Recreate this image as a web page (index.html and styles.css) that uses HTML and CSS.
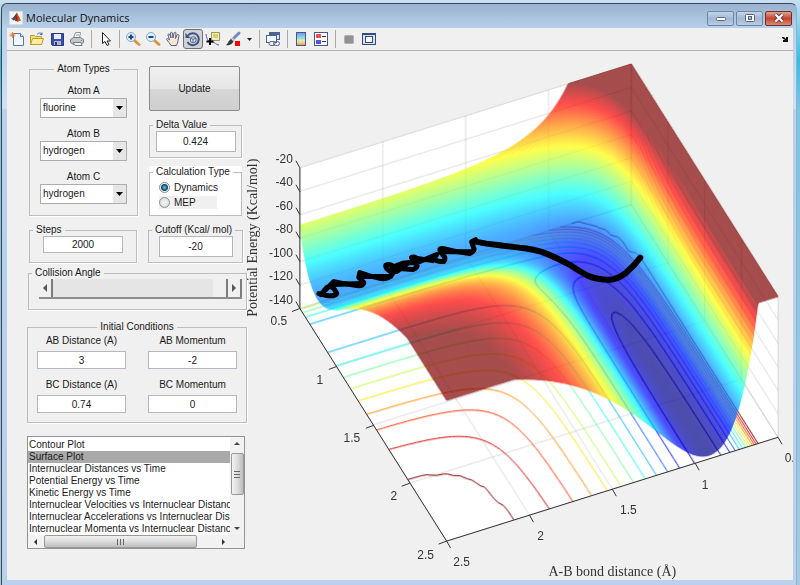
FILE: index.html
```
<!DOCTYPE html>
<html lang="en">

<head>
	<meta charset="UTF-8">
	<meta name="viewport" content="width=device-width, initial-scale=1.0">
	<title>Molecular Dynamics</title>
	<link rel="stylesheet" href="styles.css">
</head>

<body>
	<div class="window">
		<header class="titlebar">
			<svg class="app-icon" width="14" height="14" viewBox="0 0 14 14" aria-hidden="true">
				<rect width="14" height="14" fill="#f4f4f4" />
				<path d="M1 8l3-2 2 2-2 2z" fill="#3c7fb5" />
				<path d="M4 6l4-5 1 2-3 6-2 1z" fill="#5a3a50" />
				<path d="M8 1c1 1 3 6 5 9-2 0-3 1-4 2-1-1-2-2-3-2z" fill="#d9501e" />
				<path d="M8 2l1 7-2 2-1-1z" fill="#8c2412" />
			</svg>
			<h1 class="title">Molecular Dynamics</h1>
			<div class="window-buttons">
				<button type="button" class="win-btn" aria-label="Minimize">
					<svg width="12" height="10" viewBox="0 0 12 10"><rect x="1.5" y="4.5" width="9" height="3" rx="1" fill="#fff" stroke="#5b6a80" /></svg>
				</button>
				<button type="button" class="win-btn" aria-label="Maximize">
					<svg width="12" height="10" viewBox="0 0 12 10"><rect x="1.500" y="1.500" width="9" height="7" rx="1" fill="#fff" stroke="#56657b" /><rect x="4.500" y="3.500" width="3" height="3" fill="#a9bed6" stroke="#56657b" /></svg>
				</button>
				<button type="button" class="win-btn win-close" aria-label="Close">
					<svg width="12" height="10" viewBox="0 0 12 10"><path d="M2.500 1.500l7 7m0-7l-7 7" stroke="#6b4048" stroke-width="4" /><path d="M2.500 1.500l7 7m0-7l-7 7" stroke="#fff" stroke-width="2" /></svg>
				</button>
			</div>
		</header>

		<div class="client">
			<nav class="toolbar">
				<button type="button" class="tool" aria-label="New Figure">
					<svg width="16" height="16" viewBox="0 0 16 16"><path d="M4.500 2.500h7l3 3v9h-10z" fill="#f2f7ff" stroke="#5478ae" /><path d="M11.500 2.500v3h3" fill="#cfdff5" stroke="#5478ae" /><path d="M3.500 1v6M.5 4h6M1.500 2l4 4m0-4l-4 4" stroke="#e8833a" /></svg>
				</button>
				<button type="button" class="tool" aria-label="Open File">
					<svg width="16" height="16" viewBox="0 0 16 16"><path d="M1.500 13.500v-9h4l1 1h6v3" fill="#f8dc7a" stroke="#c29a2a" /><path d="M1.500 13.500l2-6h11l-2 6z" fill="#fff0a0" stroke="#c29a2a" /><path d="M8 3.500c2-2 4-2 5 0m0-2v2h-2" fill="none" stroke="#46679c" /></svg>
				</button>
				<button type="button" class="tool" aria-label="Save Figure">
					<svg width="16" height="16" viewBox="0 0 16 16"><path d="M2.500 2.500h12v12h-11l-1-1z" fill="#3c4ea8" stroke="#2c3a84" /><rect x="5" y="3" width="7" height="5" fill="#e8eefb" /><rect x="5" y="10" width="7" height="4" fill="#aab6dc" /><rect x="6" y="11" width="2" height="3" fill="#2c3a84" /></svg>
				</button>
				<button type="button" class="tool" aria-label="Print Figure">
					<svg width="16" height="16" viewBox="0 0 16 16"><path d="M4.500 7l2-5.500h5l-1 5.500" fill="#fff" stroke="#8a93a3" /><path d="M1.500 8.500l3-2h7l3 2v3l-3 2h-7l-3-2z" fill="#c4c7cc" stroke="#777d87" /><path d="M4 11.500h8l1 3H6z" fill="#f5f5f5" stroke="#777d87" /><path d="M7 4h3" stroke="#8a93a3" /><path d="M12 9.500h1" stroke="#4aa04a" /></svg>
				</button>
				<span class="sep"></span>
				<button type="button" class="tool" aria-label="Edit Plot">
					<svg width="16" height="16" viewBox="0 0 16 16"><path d="M5.500 1.500v11l2.500-2 2 4 2-1-2-3.500h3.500z" fill="#fff" stroke="#222" /></svg>
				</button>
				<span class="sep"></span>
				<button type="button" class="tool" aria-label="Zoom In">
					<svg width="16" height="16" viewBox="0 0 16 16"><path d="M9.500 9.500l4.500 4" stroke="#d99445" stroke-width="3" stroke-linecap="round" /><circle cx="6" cy="6" r="4.500" fill="#dcf2fb" stroke="#84a9cf" /><path d="M6 3.500v5M3.500 6h5" stroke="#23448c" stroke-width="2" /></svg>
				</button>
				<button type="button" class="tool" aria-label="Zoom Out">
					<svg width="16" height="16" viewBox="0 0 16 16"><path d="M9.500 9.500l4.500 4" stroke="#d99445" stroke-width="3" stroke-linecap="round" /><circle cx="6" cy="6" r="4.500" fill="#dcf2fb" stroke="#84a9cf" /><path d="M3.500 6h5" stroke="#23448c" stroke-width="2" /></svg>
				</button>
				<button type="button" class="tool" aria-label="Pan">
					<svg width="16" height="16" viewBox="0 0 16 16"><path d="M6 14.500c-1-2-3-4-4.500-6 0-1.500 1.500-1 3 .5L3 4c0-1.500 1.500-1.500 2 0l1 3-.5-5c.5-1 1.500-1 2 0L8 7l1-5c.5-1 2-1 2 0l-.5 5.500L12 4c.5-1 2-.5 2 .5l-1 5c0 2-1 3-1.500 5z" fill="#fbe6cf" stroke="#54608c" /></svg>
				</button>
				<button type="button" class="tool tool-pressed" aria-label="Rotate 3D" aria-pressed="true">
					<svg width="16" height="16" viewBox="0 0 16 16"><path d="M3 4.500a6 6 0 1 1-.5 6.500" fill="none" stroke="#3f5480" stroke-width="2" /><path d="M.5 2v5h5z" fill="#3f5480" /><path d="M5.500 7l2.500-1.500L11 7v3.500L8 12l-2.500-1.500zM5.500 7L8 8.500 11 7M8 8.500V12" fill="#d8dfed" stroke="#5b6d96" /></svg>
				</button>
				<button type="button" class="tool" aria-label="Data Cursor">
					<svg width="16" height="16" viewBox="0 0 16 16"><path d="M1 3c1 7 3 8 6 8s4 3 7 3" fill="none" stroke="#5a55e6" /><path d="M6.500 1.500h8v8h-8z" fill="#f4f0ab" stroke="#9c9750" /><path d="M8 4h5M8 6h5" stroke="#b0aa66" /><path d="M5 7v7M1.500 10.500h7" stroke="#000" stroke-width="2" /></svg>
				</button>
				<button type="button" class="tool" aria-label="Brush">
					<svg width="16" height="16" viewBox="0 0 16 16"><path d="M14 2L8 8" stroke="#7688c4" stroke-width="3" stroke-linecap="round" /><path d="M8.500 7.500l-2 2" stroke="#c9c9c9" stroke-width="4" /><path d="M6 8l2.500 2.500C7 13.500 4 15 1 14c2-1 2-4 5-6z" fill="#383838" /><rect x="10" y="10" width="5" height="5" fill="#f00" /></svg>
				</button>
				<button type="button" class="tool tool-drop" aria-label="Brush options">
					<svg width="5" height="3" viewBox="0 0 5 3"><path d="M0 0h5L2.500 3z" fill="#222" /></svg>
				</button>
				<span class="sep"></span>
				<button type="button" class="tool" aria-label="Link Plot">
					<svg width="16" height="16" viewBox="0 0 16 16"><rect x="4.500" y="1.500" width="10" height="7" fill="#dce6f5" stroke="#4c648f" /><path d="M4 3h11" stroke="#4c648f" stroke-width="2" /><rect x="1.500" y="4.500" width="10" height="7" fill="#f5f9ff" stroke="#4c648f" /><rect x="4" y="10.500" width="6" height="4" rx="2" fill="#eee" stroke="#566b8e" /><rect x="8.500" y="10.500" width="6" height="4" rx="2" fill="none" stroke="#566b8e" /></svg>
				</button>
				<span class="sep"></span>
				<button type="button" class="tool" aria-label="Insert Colorbar">
					<svg width="16" height="16" viewBox="0 0 16 16">
						<defs>
							<linearGradient id="bar" x1="0" y1="0" x2="0" y2="1">
								<stop offset="0" stop-color="#8f87e8" />
								<stop offset=".35" stop-color="#78d6ef" />
								<stop offset=".65" stop-color="#f0ee92" />
								<stop offset="1" stop-color="#f28e6c" />
							</linearGradient>
						</defs>
						<rect x="3.500" y="1.500" width="9" height="13" fill="url(#bar)" stroke="#41598c" />
					</svg>
				</button>
				<button type="button" class="tool" aria-label="Insert Legend">
					<svg width="16" height="16" viewBox="0 0 16 16"><rect x="1.500" y="1.500" width="13" height="13" fill="#fff" stroke="#41598c" /><rect x="3" y="3" width="5" height="4" fill="#ee5050" /><rect x="3" y="9" width="5" height="4" fill="#5353e8" /><path d="M9 5.500h4M9 10.500h4" stroke="#333" /></svg>
				</button>
				<span class="sep"></span>
				<button type="button" class="tool" aria-label="Hide Plot Tools">
					<svg width="16" height="16" viewBox="0 0 16 16"><rect x="3.500" y="4.500" width="9" height="8" rx="1" fill="#929292" stroke="#b0b0b0" /></svg>
				</button>
				<button type="button" class="tool" aria-label="Show Plot Tools">
					<svg width="16" height="16" viewBox="0 0 16 16"><rect x="1.500" y="2.500" width="13" height="11" fill="#d7e2f3" stroke="#344d80" /><path d="M1 3h14" stroke="#344d80" stroke-width="2" /><rect x="4.500" y="5.500" width="7" height="6" fill="#fff" stroke="#344d80" /></svg>
				</button>
				<button type="button" class="tool tool-dock" aria-label="Dock Figure">
					<svg width="6" height="6" viewBox="0 0 6 6"><path d="M0 1h2l2 2V1h2v5H1V4h2L0 2z" fill="#111" /></svg>
				</button>
			</nav>

			<main class="content">
				<form class="sidebar">
					<div class="row">
						<fieldset class="panel atoms">
							<legend>Atom Types</legend>
							<label for="atomA">Atom A</label>
							<select id="atomA" class="drop"><option>fluorine</option><option>hydrogen</option></select>
							<label for="atomB">Atom B</label>
							<select id="atomB" class="drop"><option>hydrogen</option><option>fluorine</option></select>
							<label for="atomC">Atom C</label>
							<select id="atomC" class="drop"><option>hydrogen</option><option>fluorine</option></select>
						</fieldset>

						<div class="right-col">
							<button type="button" class="update-btn">Update</button>
							<fieldset class="panel small">
								<legend><label for="delta">Delta Value</label></legend>
								<input id="delta" class="field" type="text" value="0.424">
							</fieldset>
							<fieldset class="panel calc">
								<legend>Calculation Type</legend>
								<label class="radio"><input type="radio" name="calc" checked>Dynamics</label>
								<label class="radio radio-grey"><input type="radio" name="calc">MEP</label>
							</fieldset>
						</div>
					</div>

					<div class="row row-steps">
						<fieldset class="panel small steps">
							<legend><label for="steps">Steps</label></legend>
							<input id="steps" class="field" type="text" value="2000">
						</fieldset>
						<fieldset class="panel small cutoff">
							<legend><label for="cutoff">Cutoff (Kcal/ mol)</label></legend>
							<input id="cutoff" class="field" type="text" value="-20">
						</fieldset>
					</div>

					<fieldset class="panel collision">
						<legend><label for="angle">Collision Angle</label></legend>
						<div class="slider">
							<button type="button" class="slider-btn" aria-label="Decrease angle"><svg width="4" height="8" viewBox="0 0 4 8"><path d="M4 0v8L0 4z" fill="#555" /></svg></button>
							<input id="angle" type="range" min="0" max="180" value="180">
							<button type="button" class="slider-btn" aria-label="Increase angle"><svg width="4" height="8" viewBox="0 0 4 8"><path d="M0 0v8l4-4z" fill="#555" /></svg></button>
						</div>
					</fieldset>

					<fieldset class="panel initial">
						<legend>Initial Conditions</legend>
						<div class="pair">
							<label for="abDist">AB Distance (A)</label>
							<input id="abDist" class="field" type="text" value="3">
						</div>
						<div class="pair">
							<label for="abMom">AB Momentum</label>
							<input id="abMom" class="field" type="text" value="-2">
						</div>
						<div class="pair">
							<label for="bcDist">BC Distance (A)</label>
							<input id="bcDist" class="field" type="text" value="0.74">
						</div>
						<div class="pair">
							<label for="bcMom">BC Momentum</label>
							<input id="bcMom" class="field" type="text" value="0">
						</div>
					</fieldset>

					<div class="listbox">
						<select class="plots" size="8" aria-label="Plot type">
							<option>Contour Plot</option>
							<option selected>Surface Plot</option>
							<option>Internuclear Distances vs Time</option>
							<option>Potential Energy vs Time</option>
							<option>Kinetic Energy vs Time</option>
							<option>Internuclear Velocities vs Internuclear Distance</option>
							<option>Internuclear Accelerations vs Internuclear Distance</option>
							<option>Internuclear Momenta vs Internuclear Distance</option>
						</select>
						<div class="vbar">
							<button type="button" aria-label="Scroll up"><svg width="6" height="3" viewBox="0 0 6 3"><path d="M0 3h6L3 0z" fill="#444" /></svg></button>
							<div class="vthumb"><svg width="6" height="7" viewBox="0 0 6 7"><path d="M0 .5h6M0 3.500h6M0 6.500h6" stroke="#666" /></svg></div>
							<button type="button" aria-label="Scroll down"><svg width="6" height="3" viewBox="0 0 6 3"><path d="M0 0h6L3 3z" fill="#444" /></svg></button>
						</div>
						<div class="hbar">
							<button type="button" aria-label="Scroll left"><svg width="3" height="6" viewBox="0 0 3 6"><path d="M3 0v6L0 3z" fill="#333" /></svg></button>
							<div class="hthumb"><svg width="7" height="6" viewBox="0 0 7 6"><path d="M.5 0v6M3.500 0v6M6.500 0v6" stroke="#666" /></svg></div>
							<button type="button" aria-label="Scroll right"><svg width="3" height="6" viewBox="0 0 3 6"><path d="M0 0v6l3-3z" fill="#333" /></svg></button>
						</div>
					</div>
				</form>

				<figure class="plot">
					<canvas id="surface" width="547" height="529"></canvas>
					<svg class="axes" viewBox="0 0 547 529" role="img" aria-label="Potential energy surface with trajectory">
						<g class="axis-lines">
							<path d="M53 117v141L200 491l332-104" />
							<path d="M53 117l-4-7M53 141l-4-7M53 164l-4-7M53 188l-4-7M53 211l-4-7M53 235l-4-7M53 258l-4-7" />
							<path d="M53 258l-8 3M90 316l-8 3M127 375l-8 3M163 433l-8 3M200 491l-8 3" />
							<path d="M200 491l4 7M283 465l4 7M366 439l4 7M449 413l4 7M532 387l4 7" />
						</g>
						<g class="ticks ticks-z">
							<text x="46" y="112">-20</text>
							<text x="46" y="135">-40</text>
							<text x="46" y="159">-60</text>
							<text x="46" y="182">-80</text>
							<text x="46" y="206">-100</text>
							<text x="46" y="229">-120</text>
							<text x="46" y="253">-140</text>
						</g>
						<g class="ticks">
							<text x="32" y="275">0.5</text>
							<text x="73" y="334">1</text>
							<text x="105" y="392">1.5</text>
							<text x="147" y="450">2</text>
							<text x="179" y="509">2.5</text>
							<text x="215" y="516">2.5</text>
							<text x="294" y="490">2</text>
							<text x="382" y="464">1.5</text>
							<text x="459" y="439">1</text>
							<text x="547" y="412">0.5</text>
						</g>
						<text class="axis-label" transform="translate(10 187) rotate(-90)">Potential Energy (Kcal/mol)</text>
						<text class="axis-label" x="366" y="526">A-B bond distance (Å)</text>
						<path class="loops" d="M72 243L80 245Q88 246 90 243L87 238Q82 234 79 238L74 244L87 231L97 233L110 235Q116 236 117 232L112 227L113 222L122 225L134 228Q142 229 146 223L140 218Q137 213 143 214L153 218L166 219Q172 217 170 213Q160 210 150 215Q138 222 150 221L162 212L173 211Q168 205 165 207Q168 213 178 209L190 204Q184 211 197 211Q200 208 196 204Q190 197 197 198L210 201L223 203Q229 200 227 197L225 191L229 189" />
						<path class="loops" d="M86 234L115 233M114 226L144 226M165 207L186 210M197 201L225 201" />
						<path class="trail" d="M229 191Q234 192 240 193L273 197Q287 198 300 203Q312 208 323 214Q335 222 341 225Q354 230 366 229Q374 227 380 222Q388 215 394 207" />
					</svg>
				</figure>
			</main>
		</div>
	</div>
	<script src="plot.js"></script>
</body>

</html>
```

FILE: styles.css
```
* {
	box-sizing: border-box;
}

body {
	margin: 0;
	padding: 3px 3px 0 1px;
	min-height: 100vh;
	display: flex;
	background: linear-gradient(to bottom, #c9dff2, #35bfe0 60px, #7ec4e4 110px, #a8c8e0);
	font-family: "Liberation Sans", Arial, sans-serif;
	font-size: 10px;
	line-height: 12px;
	color: #1a1a1a;
}

button {
	font: inherit;
	color: inherit;
	padding: 0;
	cursor: pointer;
}

svg {
	display: block;
}

.window {
	flex: 1;
	min-width: 0;
	display: flex;
	flex-direction: column;
	padding: 0 3px 5px 5px;
	border: 1px solid #3f4650;
	border-bottom: 0;
	border-right-color: #8fb4cf;
	border-radius: 6px 6px 0 0;
	background: linear-gradient(to bottom, #98b2cf, #b9d1ea 25px, #cfe0f3 104px, #b9d1ea 106px);
}

.titlebar {
	display: flex;
	align-items: center;
	height: 24px;
	padding: 4px 1px 0 2px;
}

.app-icon {
	border: 1px solid #d5dde6;
}

.title {
	margin: 0 auto 0 3px;
	font-family: "Open Sans", sans-serif;
	font-size: 11px;
	line-height: 14px;
	font-weight: 400;
	color: #111;
}

.window-buttons {
	display: flex;
	gap: 2px;
}

.win-btn {
	width: 27px;
	height: 15px;
	display: flex;
	align-items: center;
	justify-content: center;
	border: 1px solid #6f87a5;
	border-radius: 2px;
	background: linear-gradient(to bottom, #c3d5e9, #a2b9d3 50%, #b6cde6);
}

.win-close {
	border-color: #6b2f35;
	background: linear-gradient(to bottom, #e2a193, #c7452e 50%, #d98a72);
}

.client {
	flex: 1;
	display: flex;
	flex-direction: column;
	background: #f0f0f0;
}

.toolbar {
	display: flex;
	align-items: center;
	height: 23px;
	border-bottom: 1px solid #b4b4b4;
}

.tool {
	width: 20px;
	height: 20px;
	display: flex;
	align-items: center;
	justify-content: center;
	border: 1px solid transparent;
	border-radius: 3px;
	background: none;
}

.tool-pressed {
	border-color: #6e6e6e;
	background: #d0d2d6;
}

.tool-drop {
	width: 12px;
}

.tool-dock {
	margin-left: auto;
	width: 16px;
}

.sep {
	width: 1px;
	height: 18px;
	margin: 0 3px 0 4px;
	background: #a9a9a9;
}

.content {
	flex: 1;
	display: flex;
	align-items: flex-start;
}

/* left column */
.sidebar {
	width: 240px;
	flex: none;
	padding: 12px 0 0 20px;
}

.row {
	display: flex;
	align-items: flex-start;
	gap: 11px;
	padding-left: 2px;
}

.row-steps {
	margin-top: 8px;
}

.panel {
	min-width: 0;
	margin: 0;
	padding: 0;
	border: 1px solid #bdbdbd;
	box-shadow: 1px 1px 0 #fff;
}

.panel legend {
	padding: 0 3px;
	margin-left: 3px;
}

.atoms {
	width: 109px;
	height: 153px;
	display: flex;
	flex-direction: column;
	align-items: center;
}

.atoms legend,
.initial legend {
	margin: 0 auto;
}

.atoms label {
	margin: 10px 0 1px;
}

.drop {
	appearance: none;
	width: 87px;
	height: 20px;
	padding: 0 16px 0 2px;
	border: 1px solid #abadb3;
	border-radius: 0;
	font: inherit;
	color: inherit;
	background: url("data:image/svg+xml,%3Csvg xmlns='http://www.w3.org/2000/svg' width='13' height='18'%3E%3Crect width='13' height='18' fill='%23e6e6e6'/%3E%3Cpath d='M3 7h7l-3.500 4z'/%3E%3C/svg%3E") right center no-repeat #fff;
}

.right-col {
	width: 93px;
	padding-top: 3px;
}

.update-btn {
	display: block;
	width: 91px;
	height: 45px;
	border: 1px solid #8a8a8a;
	border-radius: 2px;
	background: linear-gradient(to bottom, #f0f0f0, #e6e6e6 50%, #d6d6d6 51%, #cfcfcf);
}

.right-col .panel {
	margin-top: 8px;
}

.field {
	display: block;
	width: 80px;
	height: 20px;
	padding: 0;
	border: 1px solid #b5b7bf;
	background: #fff;
	font: inherit;
	color: inherit;
	text-align: center;
}

.small {
	height: 39px;
}

.small .field {
	margin: 0 auto;
	height: 21px;
}

.steps {
	width: 108px;
}

.steps .field {
	height: 17px;
}

.cutoff {
	width: 95px;
}

.cutoff .field {
	width: 74px;
}

.right-col .calc {
	height: 50px;
	padding-top: 3px;
	background: #fff;
	box-shadow: 0 -6px 0 #fff;
}

.radio {
	display: flex;
	align-items: center;
	gap: 4px;
	width: 58px;
	height: 13px;
	margin: 0 0 2px 9px;
}

.radio-grey {
	background: #f0f0f0;
}

.radio input {
	appearance: none;
	flex: none;
	width: 11px;
	height: 11px;
	margin: 0;
	border: 1px solid #8e8f8f;
	border-radius: 50%;
	background: radial-gradient(circle, #f6f6f6, #d5d5d5);
}

.radio input:checked {
	background: radial-gradient(circle, #5fd0f5 0, #123f66 3px, #eee 4px);
}

.collision {
	width: 219px;
	height: 43px;
	margin: 4px 0 0 1px;
}

.slider {
	display: flex;
	height: 20px;
	margin: 0 4px 0 10px;
	border-bottom: 2px solid #8c8c8c;
}

.slider-btn {
	width: 14px;
	display: flex;
	align-items: center;
	justify-content: center;
	border: 0;
	border-right: 2px solid #7c7c7c;
	background: #f0f0f0;
}

.slider input {
	appearance: none;
	flex: 1;
	min-width: 0;
	height: 18px;
	margin: 0;
	background: #e5e5e5;
}

.slider input::-webkit-slider-thumb {
	appearance: none;
	width: 15px;
	height: 18px;
	border-right: 2px solid #7c7c7c;
	background: #f0f0f0;
}

.initial {
	width: 220px;
	height: 102px;
	margin-top: 11px;
	padding: 2px 9px 0;
	display: grid;
	grid-template-columns: 89px 89px;
	justify-content: space-between;
	align-content: start;
	row-gap: 10px;
}

.pair {
	text-align: center;
}

.pair label {
	display: block;
	margin-bottom: 4px;
}

.pair .field {
	width: 100%;
	height: 18px;
}

.listbox {
	display: grid;
	grid-template-columns: 1fr 14px;
	grid-template-rows: 98px 13px;
	width: 218px;
	margin-top: 13px;
	border: 1px solid #8e939c;
	background: #f0f0f0;
}

.plots {
	width: 100%;
	min-width: 0;
	height: 98px;
	padding: 2px 0 0;
	border: 0;
	border-radius: 0;
	outline: none;
	overflow: hidden;
	scrollbar-width: none;
	background: #fff;
	font: inherit;
	color: inherit;
}

.plots option {
	min-height: 12px;
	padding: 0 1px;
	line-height: 12px;
	color: #1a1a1a;
}

.plots option:checked {
	background: linear-gradient(#a9a9a9, #a9a9a9);
}

.vbar,
.hbar {
	display: flex;
	align-items: center;
	background: #f2f2f2;
}

.vbar {
	flex-direction: column;
}

.vbar button,
.hbar button {
	width: 14px;
	height: 13px;
	display: flex;
	align-items: center;
	justify-content: center;
	border: 0;
	background: none;
}

.vbar button:last-child,
.hbar button:last-child {
	margin: auto 0 0 auto;
}

.vthumb,
.hthumb {
	display: flex;
	align-items: center;
	justify-content: center;
	border: 1px solid #999;
	border-radius: 2px;
}

.vthumb {
	width: 13px;
	height: 42px;
	margin-top: 3px;
	background: linear-gradient(to right, #f3f3f3, #dcdcdc 50%, #bdbdbd);
}

.hthumb {
	width: 153px;
	height: 13px;
	margin-left: 2px;
	background: linear-gradient(to bottom, #f3f3f3, #dcdcdc 50%, #bdbdbd);
}

/* 3D plot */
.plot {
	flex: 1;
	min-width: 0;
	margin: 0;
	display: grid;
}

.plot canvas,
.axes {
	grid-area: 1 / 1;
	width: 100%;
	height: auto;
}

.axis-lines path {
	fill: none;
	stroke: #333;
	stroke-width: 1;
}

.ticks text {
	font-size: 12px;
	text-anchor: middle;
	fill: #333;
}

.ticks-z text {
	text-anchor: end;
}

.axis-label {
	font-family: "Liberation Serif", serif;
	font-size: 14px;
	text-anchor: middle;
	fill: #333;
}

.loops,
.trail {
	fill: none;
	stroke: #000;
	stroke-width: 5;
	stroke-linejoin: round;
	stroke-linecap: round;
}

.trail {
	stroke-width: 6;
}
```

FILE: plot.js
```
const canvas = document.getElementById('surface');
const ctx = canvas.getContext('2d');

const CUTOFF = -20;
const LOW = -138;

// Morse parameters: depth (kcal/mol), beta (1/A), r0 (A), Sato
const HF = { d: 137, b: 2.2187, r: 0.917, s: 0.18 };
const HH = { d: 108, b: 1.942, r: 0.7419, s: 0.18 };

function integrals(p, r) {
	const e = Math.exp(-p.b * (r - p.r));
	const singlet = p.d * (e * e - 2 * e);
	const triplet = p.d / 2 * (e * e + 2 * e) * (1 - p.s) / (1 + p.s);
	return [(singlet + triplet) / 2, (singlet - triplet) / 2];
}

// collinear LEPS potential
function energy(ab, bc) {
	const [q1, j1] = integrals(HF, ab);
	const [q2, j2] = integrals(HH, bc);
	const [q3, j3] = integrals(HF, ab + bc);
	const root = Math.sqrt(j1 * j1 + j2 * j2 + j3 * j3 - j1 * j2 - j2 * j3 - j1 * j3);
	return Math.min(q1 + q2 + q3 - root, CUTOFF);
}

function project(ab, bc, z) {
	return [
		53 + (2.5 - ab) * 166 + (bc - 0.5) * 73.5,
		258 - (2.5 - ab) * 52 + (bc - 0.5) * 116.5 - (z + 140) * 1.175
	];
}

function jet(z) {
	const t = Math.max(0, Math.min(1, (z - LOW) / (CUTOFF - LOW)));
	const channel = (mid) => Math.round(255 * Math.max(0, Math.min(1, 1.5 - Math.abs(4 * t - mid))));
	return `rgb(${channel(3)}, ${channel(2)}, ${channel(1)})`;
}

function polygon(c, points) {
	c.beginPath();
	points.forEach((p) => c.lineTo(p[0], p[1]));
	c.closePath();
}

function line(c, points) {
	c.beginPath();
	points.forEach((p) => c.lineTo(p[0], p[1]));
	c.stroke();
}

function drawBox() {
	ctx.fillStyle = '#fff';
	polygon(ctx, [
		project(2.5, 0.5, -20), project(0.5, 0.5, -20), project(0.5, 2.5, -20),
		project(0.5, 2.5, -140), project(2.5, 2.5, -140), project(2.5, 0.5, -140)
	]);
	ctx.fill();

	ctx.strokeStyle = 'rgba(0, 0, 0, 0.13)';
	for (let z = -140; z <= -20; z += 20) {
		line(ctx, [project(2.5, 0.5, z), project(0.5, 0.5, z), project(0.5, 2.5, z)]);
	}
	for (let r = 0.5; r <= 2.5; r += 0.5) {
		line(ctx, [project(r, 0.5, -20), project(r, 0.5, -140), project(r, 2.5, -140)]);
		line(ctx, [project(0.5, r, -20), project(0.5, r, -140), project(2.5, r, -140)]);
	}
}

function drawContour(level, n) {
	const h = 2 / n;
	ctx.strokeStyle = jet(level);
	for (let i = 0; i < n; i++) {
		for (let k = 0; k < n; k++) {
			const a = 0.5 + i * h;
			const b = 0.5 + k * h;
			const corners = [[a, b], [a + h, b], [a + h, b + h], [a, b + h]];
			const hits = [];
			corners.forEach((p, m) => {
				const q = corners[(m + 1) % 4];
				const u = energy(p[0], p[1]) - level;
				const v = energy(q[0], q[1]) - level;
				if (u * v < 0) {
					const t = u / (u - v);
					hits.push(project(p[0] + t * (q[0] - p[0]), p[1] + t * (q[1] - p[1]), -140));
				}
			});
			if (hits.length > 1) {
				line(ctx, hits.slice(0, 2));
			}
		}
	}
}

function drawSurface(n) {
	const layer = document.createElement('canvas');
	layer.width = canvas.width;
	layer.height = canvas.height;
	const c = layer.getContext('2d');
	const h = 2 / n;
	c.lineWidth = 1;
	c.lineJoin = 'round';

	// back corner first, so nearer faces cover farther ones
	for (let i = 0; i < n; i++) {
		for (let k = 0; k < n; k++) {
			const a = 0.5 + i * h;
			const b = 0.5 + k * h;
			polygon(c, [[a, b], [a + h, b], [a + h, b + h], [a, b + h]].map((p) => project(p[0], p[1], energy(p[0], p[1]))));
			c.fillStyle = c.strokeStyle = jet(energy(a + h / 2, b + h / 2));
			c.fill();
			c.stroke();
		}
	}

	ctx.globalAlpha = 0.7;
	ctx.drawImage(layer, 0, 0);
	ctx.globalAlpha = 1;
}

drawBox();
for (let level = -132.7; level < -25; level += 10.2) {
	drawContour(level, 100);
}
drawContour(CUTOFF - 0.2, 50);
drawSurface(320);
```
